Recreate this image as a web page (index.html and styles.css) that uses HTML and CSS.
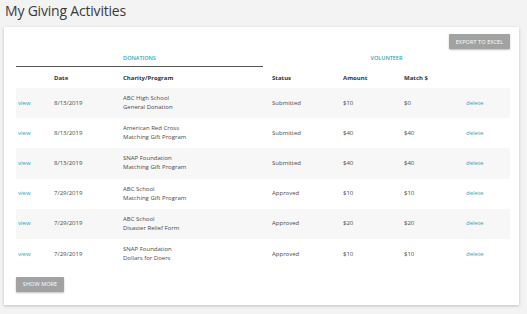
FILE: index.html
```html
<!DOCTYPE html>
<html lang="en">
<head>
  <meta charset="UTF-8" />
  <meta name="viewport" content="width=device-width, initial-scale=1.0"/>
  <title>My Giving Activities</title>
  <link rel="stylesheet" href="styles.css">
</head>
<body>
  <h1 class="page-title">My Giving Activities</h1>

  <div class="card">
    <div class="toolbar">
      <button class="btn">EXPORT TO EXCEL</button>
    </div>

    <div class="tabs">
      <div class="tab active">DONATIONS</div>
      <div class="tab">VOLUNTEER</div>
    </div>

    <table class="activities">
      <colgroup>
        <col style="width:38px">
        <col style="width:69px">
        <col style="width:149px">
        <col style="width:71px">
        <col style="width:61px">
        <col style="width:62px">
        <col>
      </colgroup>
      <thead>
        <tr>
          <th></th>
          <th>Date</th>
          <th>Charity/Program</th>
          <th>Status</th>
          <th>Amount</th>
          <th>Match $</th>
          <th></th>
        </tr>
      </thead>
      <tbody>
        <tr>
          <td><a class="link view" href="#">view</a></td>
          <td>8/13/2019</td>
          <td>ABC High School<br>General Donation</td>
          <td>Submitted</td>
          <td>$10</td>
          <td>$0</td>
          <td><a class="link" href="#">delete</a></td>
        </tr>
        <tr>
          <td><a class="link view" href="#">view</a></td>
          <td>8/13/2019</td>
          <td>American Red Cross<br>Matching Gift Program</td>
          <td>Submitted</td>
          <td>$40</td>
          <td>$40</td>
          <td><a class="link" href="#">delete</a></td>
        </tr>
        <tr>
          <td><a class="link view" href="#">view</a></td>
          <td>8/13/2019</td>
          <td>SNAP Foundation<br>Matching Gift Program</td>
          <td>Submitted</td>
          <td>$40</td>
          <td>$40</td>
          <td><a class="link" href="#">delete</a></td>
        </tr>
        <tr>
          <td><a class="link view" href="#">view</a></td>
          <td>7/29/2019</td>
          <td>ABC School<br>Matching Gift Program</td>
          <td>Approved</td>
          <td>$10</td>
          <td>$10</td>
          <td><a class="link" href="#">delete</a></td>
        </tr>
        <tr>
          <td><a class="link view" href="#">view</a></td>
          <td>7/29/2019</td>
          <td>ABC School<br>Disaster Relief Form</td>
          <td>Approved</td>
          <td>$20</td>
          <td>$20</td>
          <td><a class="link" href="#">delete</a></td>
        </tr>
        <tr>
          <td><a class="link view" href="#">view</a></td>
          <td>7/29/2019</td>
          <td>SNAP Foundation<br>Dollars for Doers</td>
          <td>Approved</td>
          <td>$10</td>
          <td>$10</td>
          <td><a class="link" href="#">delete</a></td>
        </tr>
      </tbody>
    </table>

    <button class="btn more">SHOW MORE</button>
  </div>
</body>
</html>
```

FILE: styles.css
```css
body {
  margin: 0;
  background: #f3f3f3;
  color: #444;
  font-family: "Open Sans", "Noto Sans", Arial, sans-serif;
  width: 527px;
  height: 314px;
  overflow: hidden;
}

.page-title {
  margin: 0;
  padding: 1px 0 0 5px;
  height: 26px;
  font-size: 14px;
  font-weight: 400;
  letter-spacing: -0.2px;
  color: #3a3a3a;
  line-height: 20px;
}

.card {
  margin-left: 4px;
  width: 515px;
  height: 278px;
  box-sizing: border-box;
  background: #ffffff;
  padding: 7px 9px 0 12px;
  box-shadow: 0 1px 3px rgba(0, 0, 0, 0.22);
}

.toolbar {
  display: flex;
  justify-content: flex-end;
  height: 15px;
}

.btn {
  background: #a2a2a2;
  border: none;
  color: #ffffff;
  font-family: inherit;
  font-size: 5.5px;
  letter-spacing: 0.1px;
  height: 15px;
  padding: 0 6px;
  border-radius: 1px;
  box-shadow: 0 1px 2px rgba(0, 0, 0, 0.25);
  cursor: pointer;
}

.toolbar .btn {
  width: 61px;
}

.tabs {
  display: flex;
  margin-top: 4px;
  height: 14px;
}

.tab {
  flex: 1;
  text-align: center;
  color: #2ba6bb;
  font-size: 5.5px;
  font-weight: 600;
  line-height: 10px;
}

.tab.active {
  border-bottom: 1.5px solid #555;
}

.activities {
  width: 494px;
  border-collapse: collapse;
  table-layout: fixed;
  font-size: 6px;
}

.activities th {
  height: 21px;
  text-align: left;
  font-weight: 700;
  color: #333;
  padding: 0;
}

.activities td {
  height: 30.2px;
  padding: 0;
  line-height: 9px;
  color: #4a4a4a;
}

.activities tbody tr:nth-child(odd) {
  background: #f7f7f7;
}

.link {
  color: #2ba6bb;
  text-decoration: none;
}

.view {
  padding-left: 2px;
}

.btn.more {
  margin-top: 4px;
  width: 48px;
  font-size: 5.5px;
}
```
